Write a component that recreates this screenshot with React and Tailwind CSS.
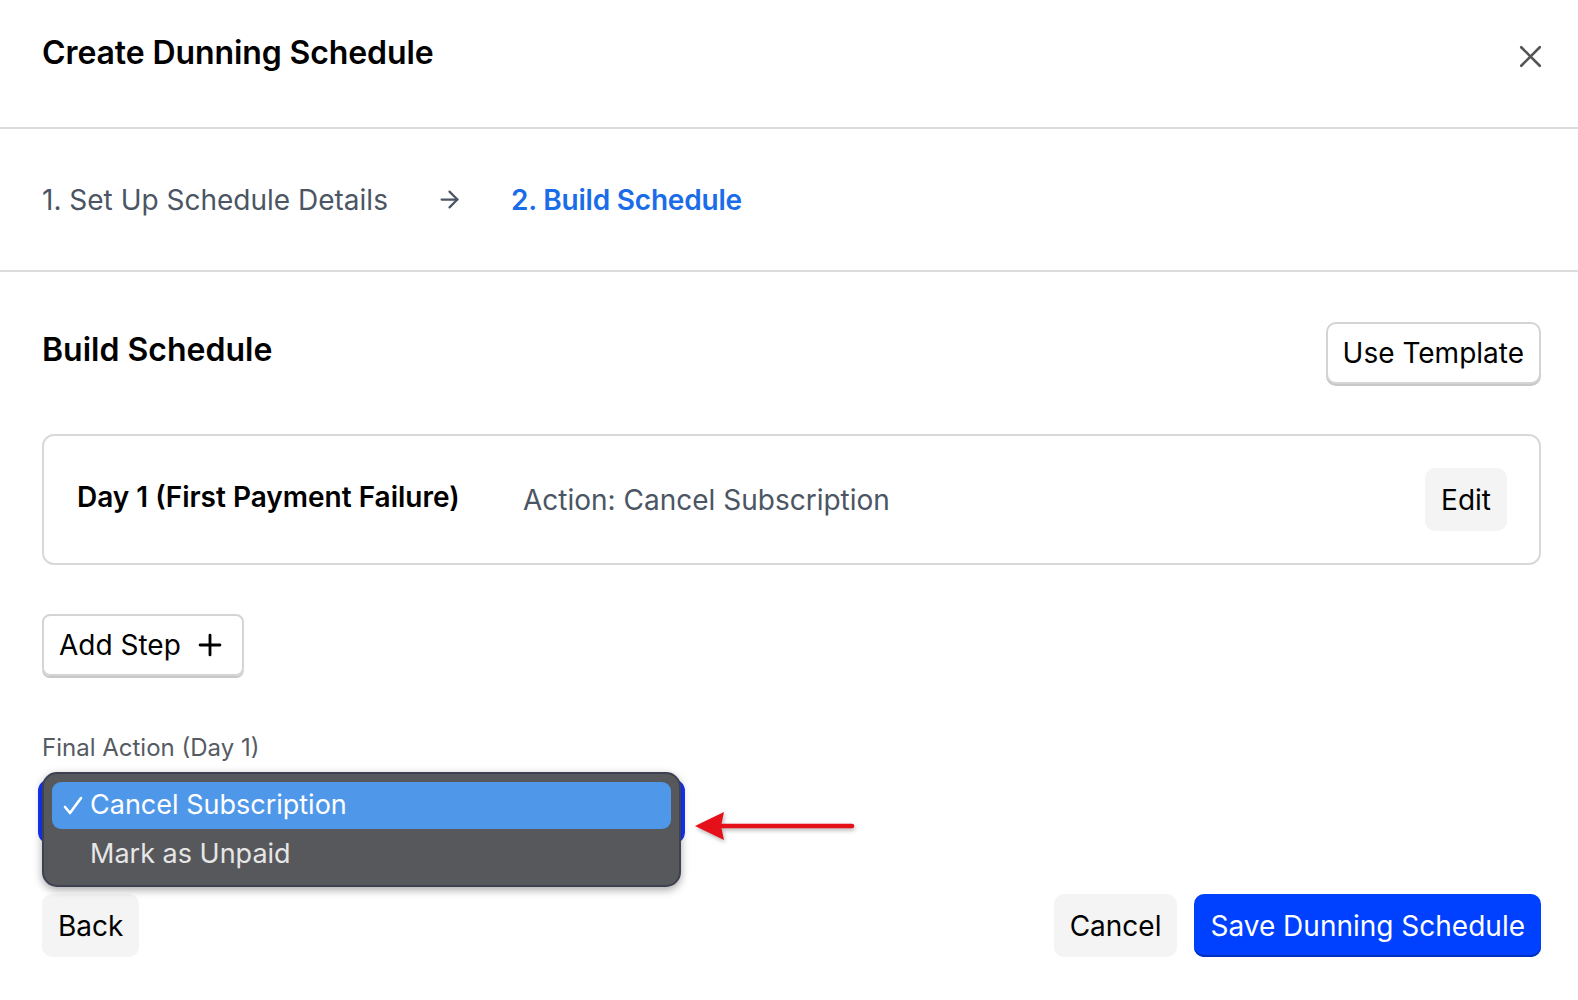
import React from 'react';
import { X, ArrowRight, Plus } from 'lucide-react';

const App = () => {
  return (
    <div className="min-h-screen bg-white text-black" style={{ fontFamily: 'Inter, "Noto Sans", sans-serif' }}>
      {/* Header */}
      <div className="flex justify-between items-start h-[129px] border-b-2 border-[#dcdcdc] pl-[42px] pr-[29px] pt-[33px]">
        <h1 className="text-[32px] leading-[40px] font-semibold tracking-[-0.1px]">Create Dunning Schedule</h1>
        <X className="w-[37px] h-[37px] mt-[5px] text-[#555]" strokeWidth={1.7} />
      </div>

      {/* Steps */}
      <div className="flex items-center h-[143px] border-b-2 border-[#dcdcdc] px-[42px] text-[28px]">
        <span className="text-[#4b5563]">1. Set Up Schedule Details</span>
        <ArrowRight className="w-[27px] h-[27px] ml-[48px] mr-[48px] text-[#4b5563]" strokeWidth={2} />
        <span className="text-[#1a6ce8] font-semibold tracking-[-0.2px]">2. Build Schedule</span>
      </div>

      {/* Content */}
      <div className="pl-[42px] pr-[37px] pt-[50px]">
        <div className="flex justify-between items-center">
          <h2 className="text-[32px] font-semibold -mt-[6px]">Build Schedule</h2>
          <button className="h-[62px] px-[15px] rounded-[10px] border-2 border-[#d4d4d4] shadow-[0_2px_0_#c8c8c8] text-[28px] bg-white">
            Use Template
          </button>
        </div>

        <div className="mt-[50px] h-[131px] rounded-[12px] border-2 border-[#d9d9d9] flex items-center pl-[33px] pr-[32px]">
          <span className="text-[28px] font-semibold w-[446px] -mt-[6px]">Day 1 (First Payment Failure)</span>
          <span className="text-[28px] text-[#4b5563]">Action: Cancel Subscription</span>
          <button className="ml-auto h-[63px] px-[16px] rounded-[10px] bg-[#f4f4f4] text-[28px]">Edit</button>
        </div>

        <button className="mt-[49px] h-[62px] px-[15px] rounded-[8px] border-2 border-[#d4d4d4] shadow-[0_2px_0_#c8c8c8] text-[28px] flex items-center gap-[12px]">
          Add Step <Plus className="w-[34px] h-[34px]" strokeWidth={2} />
        </button>

        <div className="mt-[56px] text-[24px] text-[#555b63] leading-[32px]">Final Action (Day 1)</div>

        <div className="relative mt-[15px] w-[647px] -ml-[4px] h-[65px]">
          <div className="h-full rounded-[12px] border-[4px] border-[#1436ff]"></div>

          {/* native select popup */}
          <div className="absolute left-[4px] -top-[7px] w-[639px] h-[115px] rounded-[15px] bg-[#57585c] border-2 border-[#3e4150] shadow-[0_3px_8px_rgba(0,0,0,0.35)] px-[8px] pt-[8px]">
            <div className="h-[47px] rounded-[9px] bg-[#4f98e9] flex items-center text-white text-[27px]">
              <span className="w-[38px] pl-[11px] flex items-center">
                <svg width="20" height="20" viewBox="0 0 20 20" fill="none" stroke="white" strokeWidth="2.6" strokeLinecap="round" strokeLinejoin="round">
                  <path d="M2 11 L7 17 L18 2" />
                </svg>
              </span>
              <span>Cancel Subscription</span>
            </div>
            <div className="h-[50px] flex items-center text-[#e6e6e6] text-[27px] pl-[38px]">Mark as Unpaid</div>
          </div>

          {/* annotation arrow */}
          <svg className="absolute left-[657px] top-[30px]" width="162" height="34" viewBox="0 0 162 34" style={{ filter: 'drop-shadow(1px 2px 2px rgba(0,0,0,0.3))' }}>
            <line x1="24" y1="17" x2="157" y2="17" stroke="#e5101a" strokeWidth="4.5" strokeLinecap="round" />
            <polygon points="0,17 29,3 26,17 29,31" fill="#e5101a" />
          </svg>
        </div>

        <div className="flex items-center mt-[50px]">
          <button className="h-[63px] px-[16px] rounded-[10px] bg-[#f4f4f4] text-[28px]">Back</button>
          <button className="ml-auto h-[63px] px-[16px] rounded-[10px] bg-[#f4f4f4] text-[28px]">Cancel</button>
          <button className="ml-[17px] h-[63px] px-[16px] rounded-[10px] bg-[#0040ff] text-white text-[28px] shadow-[inset_0_-2px_0_#0030c0]">
            Save Dunning Schedule
          </button>
        </div>
      </div>
    </div>
  );
};

export default App;
